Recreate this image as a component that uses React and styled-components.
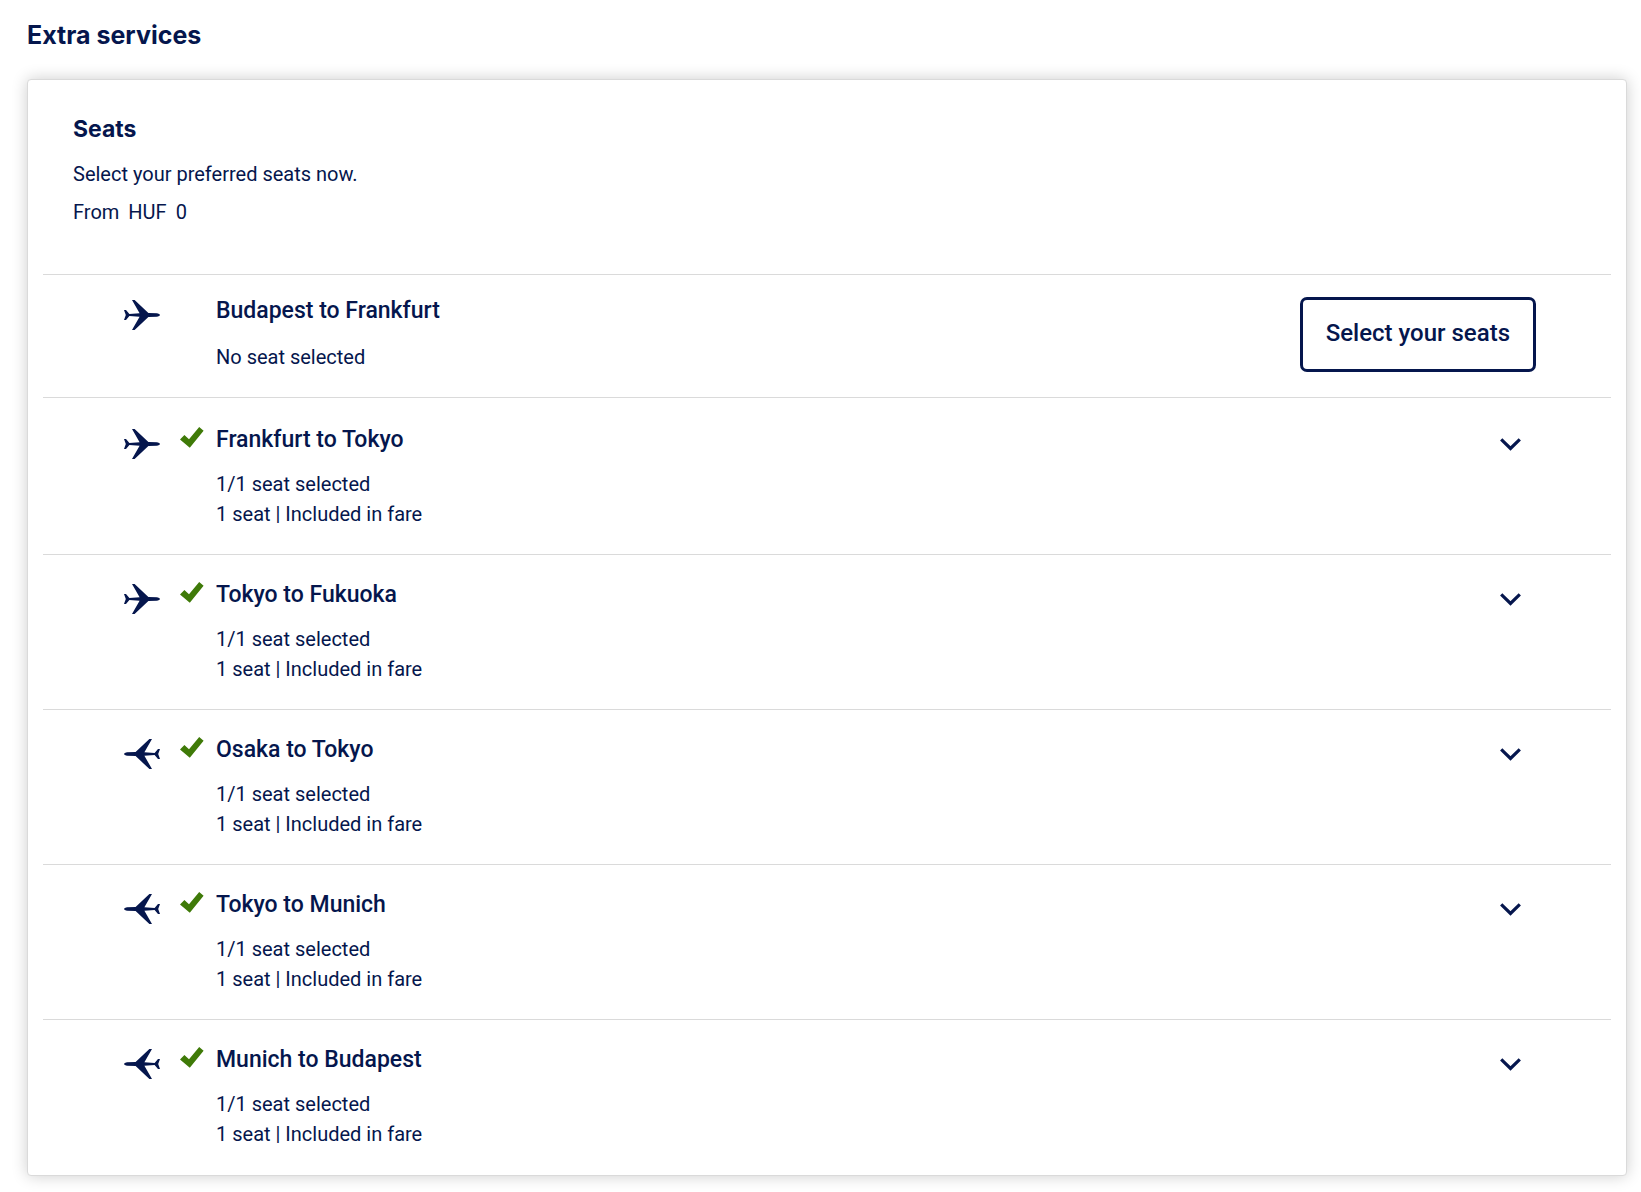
import React, { useState } from "react";
import styled, { createGlobalStyle } from "styled-components";

const navy = "#05164d";
const line = "#dadada";

const GlobalStyle = createGlobalStyle`
  *, *::before, *::after { box-sizing: border-box; }
  body {
    margin: 0;
    background: #fff;
    color: ${navy};
    font-family: Roboto, "Liberation Sans", sans-serif;
    font-size: 20px;
    line-height: 30px;
  }
  h1, h2, h3, p, ul { margin: 0; padding: 0; }
`;

const Page = styled.main`
  padding: 19px 14px 16px 27px;
`;

const PageTitle = styled.h1`
  font-family: Inter, "Liberation Sans", sans-serif;
  font-size: 25px;
  font-weight: 700;
  line-height: 32px;
`;

const Card = styled.section`
  margin-top: 28px;
  border: 1px solid ${line};
  border-radius: 4px;
  background: #fff;
  box-shadow: 0 0 16px rgba(0, 0, 0, 0.2);
`;

const CardHeader = styled.header`
  display: flex;
  flex-direction: column;
  gap: 8px;
  padding: 34px 45px 47px;
`;

const CardTitle = styled.h2`
  margin-bottom: 7px;
  font-family: Inter, "Liberation Sans", sans-serif;
  font-size: 23px;
  font-weight: 700;
  line-height: 30px;
`;

const Price = styled.p`
  display: flex;
  gap: 9px;
`;

const FlightList = styled.ul`
  margin: 0 15px 1px;
  list-style: none;
`;

const Flight = styled.li`
  display: grid;
  grid-template-columns: 36px 24px 1fr auto;
  align-items: start;
  padding: ${(p) => (p.$pending ? "20px" : "24px")} 75px 25px 81px;
  border-top: 1px solid ${line};

  &:nth-child(2) { padding-top: 26px; }
`;

const PlaneIcon = styled.svg`
  width: 36px;
  height: 30px;
  margin-top: 5px;
  fill: ${navy};
  transform: ${(p) => (p.$inbound ? "scaleX(-1)" : "none")};
`;

const CheckIcon = styled.svg`
  width: 24px;
  height: 21px;
  margin: 3px 0 0 20px;
  fill: #3f7a08;
`;

const FlightText = styled.div`
  grid-column: 3;
  padding-left: 32px;
`;

const Route = styled.h3`
  margin-bottom: ${(p) => (p.$pending ? "15px" : "13px")};
  font-size: 23px;
  font-weight: 500;
  line-height: 32px;
`;

const SelectButton = styled.button`
  margin-top: 2px;
  padding: 18px 23px 21px;
  border: 3px solid ${navy};
  border-radius: 7px;
  background: #fff;
  color: ${navy};
  font-family: inherit;
  font-size: 24px;
  font-weight: 500;
  line-height: 30px;
  cursor: pointer;
`;

const ToggleButton = styled.button`
  display: flex;
  margin: 9px 10px 0 0;
  padding: 5px;
  border: 0;
  background: none;
  cursor: pointer;

  svg {
    width: 21px;
    height: 13px;
    fill: none;
    stroke: ${navy};
    stroke-width: 3.2;
    transform: ${(p) => (p.$open ? "rotate(180deg)" : "none")};
  }
`;

const flights = [
  { route: "Budapest to Frankfurt", pending: true },
  { route: "Frankfurt to Tokyo" },
  { route: "Tokyo to Fukuoka" },
  { route: "Osaka to Tokyo", inbound: true },
  { route: "Tokyo to Munich", inbound: true },
  { route: "Munich to Budapest", inbound: true },
];

function Plane({ inbound }) {
  return (
    <PlaneIcon $inbound={inbound} viewBox="0 0 36 30" aria-hidden="true">
      <path d="M8 0H10.6L24.4 12.9L33 13.2Q36 13.7 36 15Q36 16.3 33 16.8L24.4 17.1L10.6 30H8L15.6 16.8L5.4 15.9L2 20H0L1.8 15L0 10H2L5.4 14.1L15.6 13.2Z" />
    </PlaneIcon>
  );
}

function Check() {
  return (
    <CheckIcon viewBox="0 0 24 21" role="img" aria-label="Seat selected">
      <path d="M0 12.6L4.4 8.1L9 12.2L19.2 0L23.6 3.8L9.8 20.8Z" />
    </CheckIcon>
  );
}

function FlightRow({ route, pending, inbound }) {
  const [open, setOpen] = useState(false);
  return (
    <Flight $pending={pending}>
      <Plane inbound={inbound} />
      {!pending && <Check />}
      <FlightText>
        <Route $pending={pending}>{route}</Route>
        {pending ? (
          <p>No seat selected</p>
        ) : (
          <>
            <p>1/1 seat selected</p>
            <p>1 seat | Included in fare</p>
          </>
        )}
      </FlightText>
      {pending ? (
        <SelectButton type="button">Select your seats</SelectButton>
      ) : (
        <ToggleButton
          type="button"
          $open={open}
          aria-expanded={open}
          aria-label={`Details for ${route}`}
          onClick={() => setOpen(!open)}
        >
          <svg viewBox="0 0 21 13" aria-hidden="true">
            <path d="M1.2 1.4L10.5 10.4L19.8 1.4" />
          </svg>
        </ToggleButton>
      )}
    </Flight>
  );
}

export default function App() {
  return (
    <>
      <GlobalStyle />
      <Page>
        <PageTitle>Extra services</PageTitle>
        <Card>
          <CardHeader>
            <CardTitle>Seats</CardTitle>
            <p>Select your preferred seats now.</p>
            <Price>
              <span>From</span>
              <span>HUF</span>
              <span>0</span>
            </Price>
          </CardHeader>
          <FlightList>
            {flights.map((flight) => (
              <FlightRow key={flight.route} {...flight} />
            ))}
          </FlightList>
        </Card>
      </Page>
    </>
  );
}
